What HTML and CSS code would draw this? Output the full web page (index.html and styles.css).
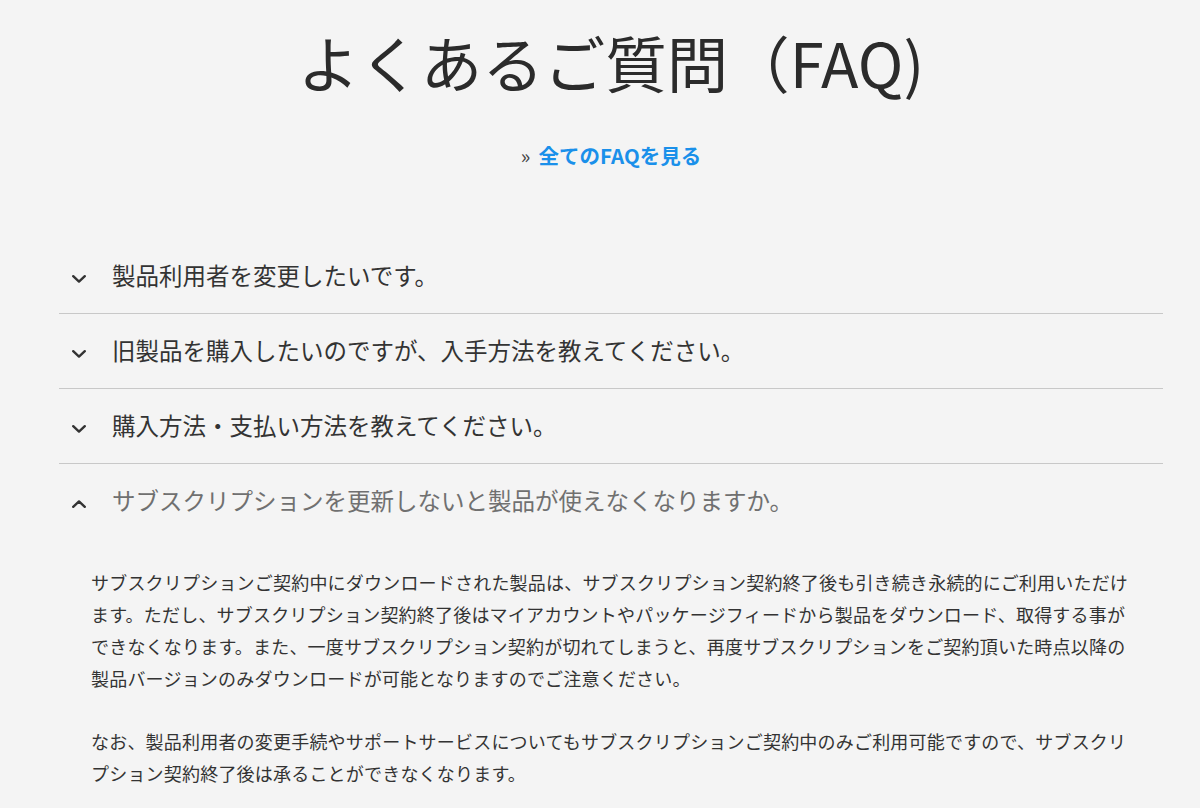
FILE: index.html
```html
<!DOCTYPE html>
<html lang="ja">
<head>
<meta charset="utf-8">
<title>よくあるご質問（FAQ)</title>
<link rel="stylesheet" href="styles.css">
</head>
<body>
<main class="page">
  <h1 class="title">よくあるご質問（FAQ)</h1>
  <p class="all-link"><span class="raquo">»</span><a href="#">全てのFAQを見る</a></p>

  <div class="faq">
    <div class="item">
      <div class="q">
        <svg class="chev" viewBox="0 0 14 8" width="14" height="8"><path d="M1.2 1.2 L7 6.6 L12.8 1.2" fill="none" stroke="#333" stroke-width="2.4" stroke-linecap="round" stroke-linejoin="round"/></svg>
        <span class="q-text">製品利用者を変更したいです。</span>
      </div>
    </div>
    <div class="item">
      <div class="q">
        <svg class="chev" viewBox="0 0 14 8" width="14" height="8"><path d="M1.2 1.2 L7 6.6 L12.8 1.2" fill="none" stroke="#333" stroke-width="2.4" stroke-linecap="round" stroke-linejoin="round"/></svg>
        <span class="q-text">旧製品を購入したいのですが、入手方法を教えてください。</span>
      </div>
    </div>
    <div class="item">
      <div class="q">
        <svg class="chev" viewBox="0 0 14 8" width="14" height="8"><path d="M1.2 1.2 L7 6.6 L12.8 1.2" fill="none" stroke="#333" stroke-width="2.4" stroke-linecap="round" stroke-linejoin="round"/></svg>
        <span class="q-text">購入方法・支払い方法を教えてください。</span>
      </div>
    </div>
    <div class="item open">
      <div class="q">
        <svg class="chev chev-up" viewBox="0 0 14 8" width="14" height="8"><path d="M1.2 6.8 L7 1.4 L12.8 6.8" fill="none" stroke="#333" stroke-width="2.4" stroke-linecap="round" stroke-linejoin="round"/></svg>
        <span class="q-text">サブスクリプションを更新しないと製品が使えなくなりますか。</span>
      </div>
      <div class="answer">
        <p>サブスクリプションご契約中にダウンロードされた製品は、サブスクリプション契約終了後も引き続き永続的にご利用いただけます。ただし、サブスクリプション契約終了後はマイアカウントやパッケージフィードから製品をダウンロード、取得する事ができなくなります。また、一度サブスクリプション契約が切れてしまうと、再度サブスクリプションをご契約頂いた時点以降の製品バージョンのみダウンロードが可能となりますのでご注意ください。</p>
        <p>なお、製品利用者の変更手続やサポートサービスについてもサブスクリプションご契約中のみご利用可能ですので、サブスクリプション契約終了後は承ることができなくなります。</p>
      </div>
    </div>
  </div>
</main>
</body>
</html>
```

FILE: styles.css
```css
html, body {
  margin: 0;
  padding: 0;
  background: #f4f4f4;
}

body {
  font-family: "Noto Sans CJK JP", "Noto Sans", sans-serif;
  color: #333;
}

.page {
  width: 1104px;
  margin-left: 59px;
  padding-top: 26px;
}

.title {
  margin: 0;
  text-align: center;
  font-size: 61.5px;
  line-height: 72px;
  font-weight: 400;
  color: #2b2b2b;
}

.all-link {
  margin: 42px 0 0;
  text-align: center;
  font-size: 20.5px;
  line-height: 30px;
}

.raquo {
  font-size: 20px;
  color: #444;
  margin-right: 8px;
}

.all-link a {
  color: #1a90ea;
  font-weight: 700;
  text-decoration: none;
}

.faq {
  margin-top: 68px;
}

.item {
  border-bottom: 1px solid #c8c8c8;
}

.item.open {
  border-bottom: none;
}

.q {
  display: flex;
  align-items: center;
  padding: 18px 0 20px 13px;
  font-size: 23.5px;
  line-height: 36px;
}

.chev {
  flex: none;
  margin-top: 8px;
  margin-right: 26px;
}

.chev-up {
  margin-top: 8px;
}

.q-text {
  color: #333;
}

.open .q-text {
  color: #707070;
}

.answer {
  padding: 28px 32px 0 32px;
  font-size: 18px;
  letter-spacing: 0.2px;
  line-height: 32px;
}

.answer p {
  margin: 0 0 31px;
}
```
